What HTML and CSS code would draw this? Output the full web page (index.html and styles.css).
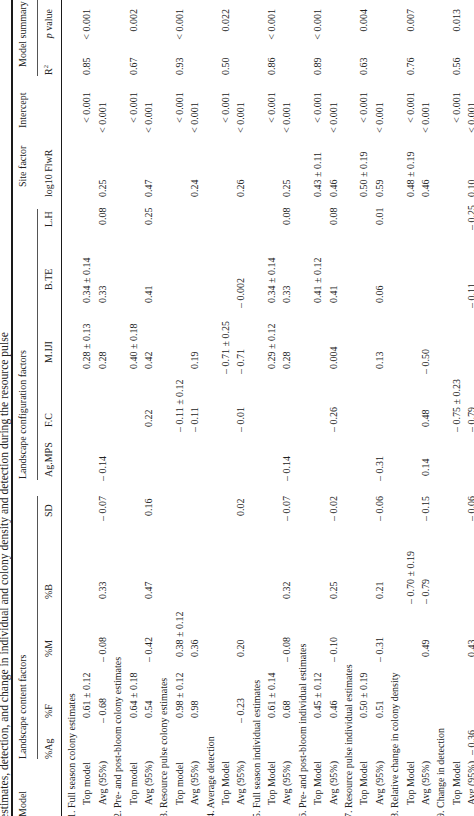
FILE: index.html
```html
<!DOCTYPE html>
<html>
<head>
<meta charset="utf-8">
<link rel="stylesheet" href="styles.css">
</head>
<body>
<div class="page">
 <div class="rot">
  <div class="sheet">
   <div class="caption">estimates, detection, and change in individual and colony density and detection during the resource pulse</div>
   <div class="rule-thick"></div>
   <div class="grid groups">
    <div class="c1 flush">Model</div>
    <div class="g-content">Landscape content factors</div>
    <div class="g-config">Landscape configuration factors</div>
    <div class="g-site">Site factor</div>
    <div class="g-int">Intercept</div>
    <div class="g-sum">Model summary</div>
   </div>
   <div class="grid cols">
    <div class="c2 h-ag">%Ag</div>
    <div class="c3">%F</div>
    <div class="c4">%M</div>
    <div class="c5">%B</div>
    <div class="c6 h-sd">SD</div>
    <div class="c7 h-mps">Ag.MPS</div>
    <div class="c8">F.C</div>
    <div class="c9 h-iji">M.IJI</div>
    <div class="c10 h-te">B.TE</div>
    <div class="c11 h-lh">L.H</div>
    <div class="c12">log10 FlwR</div>
    <div class="c14">R<sup>2</sup></div>
    <div class="c15 h-p"><i>p</i> value</div>
   </div>
   <div class="rule-thick rule-low"></div>

   <div class="grid row"><div class="sec">1. Full season colony estimates</div></div>
   <div class="grid row">
    <div class="c1 lbl">Top model</div><div class="c3">0.61 ± 0.12</div><div class="c9">0.28 ± 0.13</div><div class="c10">0.34 ± 0.14</div><div class="c13">&lt; 0.001</div><div class="c14">0.85</div><div class="c15">&lt; 0.001</div>
   </div>
   <div class="grid row">
    <div class="c1 lbl">Avg (95%)</div><div class="c3 neg">– 0.68</div><div class="c4 neg">– 0.08</div><div class="c5">0.33</div><div class="c6 neg">– 0.07</div><div class="c7 neg">– 0.14</div><div class="c9">0.28</div><div class="c10">0.33</div><div class="c11">0.08</div><div class="c12">0.25</div><div class="c13 int-avg">&lt; 0.001</div>
   </div>

   <div class="grid row"><div class="sec">2. Pre- and post-bloom colony estimates</div></div>
   <div class="grid row">
    <div class="c1 lbl">Top model</div><div class="c3">0.64 ± 0.18</div><div class="c9">0.40 ± 0.18</div><div class="c13">&lt; 0.001</div><div class="c14">0.67</div><div class="c15">0.002</div>
   </div>
   <div class="grid row">
    <div class="c1 lbl">Avg (95%)</div><div class="c3">0.54</div><div class="c4 neg">– 0.42</div><div class="c5">0.47</div><div class="c6">0.16</div><div class="c8">0.22</div><div class="c9">0.42</div><div class="c10">0.41</div><div class="c11">0.25</div><div class="c12">0.47</div><div class="c13 int-avg">&lt; 0.001</div>
   </div>

   <div class="grid row"><div class="sec">3. Resource pulse colony estimates</div></div>
   <div class="grid row">
    <div class="c1 lbl">Top model</div><div class="c3">0.98 ± 0.12</div><div class="c4">0.38 ± 0.12</div><div class="c8 neg">– 0.11 ± 0.12</div><div class="c13">&lt; 0.001</div><div class="c14">0.93</div><div class="c15">&lt; 0.001</div>
   </div>
   <div class="grid row">
    <div class="c1 lbl">Avg (95%)</div><div class="c3">0.98</div><div class="c4">0.36</div><div class="c8 neg">– 0.11</div><div class="c9">0.19</div><div class="c12">0.24</div><div class="c13 int-avg">&lt; 0.001</div>
   </div>

   <div class="grid row"><div class="sec">4. Average detection</div></div>
   <div class="grid row">
    <div class="c1 lbl">Top Model</div><div class="c9 neg">– 0.71 ± 0.25</div><div class="c13">&lt; 0.001</div><div class="c14">0.50</div><div class="c15">0.022</div>
   </div>
   <div class="grid row">
    <div class="c1 lbl">Avg (95%)</div><div class="c3 neg">– 0.23</div><div class="c4">0.20</div><div class="c6">0.02</div><div class="c8 neg">– 0.01</div><div class="c9 neg">– 0.71</div><div class="c10 neg">– 0.002</div><div class="c12">0.26</div><div class="c13 int-avg">&lt; 0.001</div>
   </div>

   <div class="grid row"><div class="sec">5. Full season individual estimates</div></div>
   <div class="grid row">
    <div class="c1 lbl">Top Model</div><div class="c3">0.61 ± 0.14</div><div class="c9">0.29 ± 0.12</div><div class="c10">0.34 ± 0.14</div><div class="c13">&lt; 0.001</div><div class="c14">0.86</div><div class="c15">&lt; 0.001</div>
   </div>
   <div class="grid row">
    <div class="c1 lbl">Avg (95%)</div><div class="c3">0.68</div><div class="c4 neg">– 0.08</div><div class="c5">0.32</div><div class="c6 neg">– 0.07</div><div class="c7 neg">– 0.14</div><div class="c9">0.28</div><div class="c10">0.33</div><div class="c11">0.08</div><div class="c12">0.25</div><div class="c13 int-avg">&lt; 0.001</div>
   </div>

   <div class="grid row"><div class="sec">6. Pre- and post-bloom individual estimates</div></div>
   <div class="grid row">
    <div class="c1 lbl">Top Model</div><div class="c3">0.45 ± 0.12</div><div class="c10">0.41 ± 0.12</div><div class="c12">0.43 ± 0.11</div><div class="c13">&lt; 0.001</div><div class="c14">0.89</div><div class="c15">&lt; 0.001</div>
   </div>
   <div class="grid row">
    <div class="c1 lbl">Avg (95%)</div><div class="c3">0.46</div><div class="c4 neg">– 0.10</div><div class="c5">0.25</div><div class="c6 neg">– 0.02</div><div class="c8 neg">– 0.26</div><div class="c9">0.004</div><div class="c10">0.41</div><div class="c11">0.08</div><div class="c12">0.46</div><div class="c13 int-avg">&lt; 0.001</div>
   </div>

   <div class="grid row"><div class="sec">7. Resource pulse individual estimates</div></div>
   <div class="grid row">
    <div class="c1 lbl">Top Model</div><div class="c3">0.50 ± 0.19</div><div class="c12">0.50 ± 0.19</div><div class="c13">&lt; 0.001</div><div class="c14">0.63</div><div class="c15">0.004</div>
   </div>
   <div class="grid row">
    <div class="c1 lbl">Avg (95%)</div><div class="c3">0.51</div><div class="c4 neg">– 0.31</div><div class="c5">0.21</div><div class="c6 neg">– 0.06</div><div class="c7 neg">– 0.31</div><div class="c9">0.13</div><div class="c10">0.06</div><div class="c11">0.01</div><div class="c12">0.59</div><div class="c13 int-avg">&lt; 0.001</div>
   </div>

   <div class="grid row"><div class="sec">8. Relative change in colony density</div></div>
   <div class="grid row">
    <div class="c1 lbl">Top Model</div><div class="c5 neg">– 0.70 ± 0.19</div><div class="c12">0.48 ± 0.19</div><div class="c13">&lt; 0.001</div><div class="c14">0.76</div><div class="c15">0.007</div>
   </div>
   <div class="grid row">
    <div class="c1 lbl">Avg (95%)</div><div class="c4">0.49</div><div class="c5 neg">– 0.79</div><div class="c6 neg">– 0.15</div><div class="c7">0.14</div><div class="c8">0.48</div><div class="c9 neg">– 0.50</div><div class="c12">0.46</div><div class="c13 int-avg">&lt; 0.001</div>
   </div>

   <div class="grid row"><div class="sec">9. Change in detection</div></div>
   <div class="grid row">
    <div class="c1 lbl">Top Model</div><div class="c8 neg">– 0.75 ± 0.23</div><div class="c13">&lt; 0.001</div><div class="c14">0.56</div><div class="c15">0.013</div>
   </div>
   <div class="grid row">
    <div class="c1 lbl">Avg (95%)</div><div class="c2">– 0.36</div><div class="c4">0.43</div><div class="c6 neg">– 0.06</div><div class="c8 neg">– 0.79</div><div class="c10 neg">– 0.11</div><div class="c11 neg">– 0.25</div><div class="c12">0.10</div><div class="c13 int-avg">&lt; 0.001</div>
   </div>
  </div>
 </div>
</div>
</body>
</html>
```
FILE: styles.css
```css
* { box-sizing: border-box; }
html, body { margin: 0; padding: 0; background: #fff; }

.page {
  width: 474px;
  height: 816px;
  overflow: hidden;
  background: #fff;
}

.rot {
  width: 816px;
  height: 474px;
  transform-origin: 0 0;
  transform: translateY(816px) rotate(-90deg);
}

.sheet {
  font-family: "Liberation Serif", "Times New Roman", serif;
  font-size: 10px;
  color: #222;
}

.caption {
  height: 11px;
  line-height: 9px;
  font-size: 11.6px;
  white-space: nowrap;
  margin-left: -3px;
}

.rule-thick {
  height: 1.5px;
  background: #1a1a1a;
}

.rule-low { margin-bottom: 2px; }

.grid {
  display: grid;
  grid-template-columns: 61px 37px 61px 58px 83px 40px 49px 58px 66px 78px 28px 74px 48px 21px 54px;
  white-space: nowrap;
}

.grid > div { grid-row: 1; }

.groups {
  height: 25px;
}
.groups > div {
  padding-top: 4px;
  line-height: 12px;
}

.flush { margin-left: -1px; }

.g-content {
  grid-column: 2 / 7;
  border-bottom: 1px solid #555;
  margin-left: -4px;
  margin-right: 20px;
}
.g-config {
  grid-column: 7 / 12;
  border-bottom: 1px solid #555;
  padding-left: 1px;
  margin-left: -4px;
  margin-right: 12px;
}
.g-site {
  grid-column: 12 / 13;
  padding-left: 10px;
}
.g-int {
  grid-column: 13 / 14;
  margin-left: -5px;
}
.g-sum {
  grid-column: 14 / 16;
  border-bottom: 1px solid #555;
  padding-left: 9px;
  margin-left: -1px;
}

.cols {
  height: 23px;
  align-items: center;
  line-height: 12px;
}

.cols sup {
  font-size: 6.5px;
  line-height: 0;
  vertical-align: 4px;
}

.h-ag { margin-left: -4px; }
.h-sd { margin-left: -1px; }
.h-mps { margin-left: -1px; }
.h-iji { padding-left: 6px; }
.h-te { padding-left: 13px; }
.h-lh { margin-left: -2px; }
.h-p { padding-right: 5px; }

.row {
  height: 15.4px;
  line-height: 15.4px;
}

.sec {
  grid-column: 1 / -1;
  margin-left: -2px;
}
.lbl { padding-left: 11px; }

.c1 { grid-column: 1; }
.c2 { grid-column: 2; }
.c3 { grid-column: 3; }
.c4 { grid-column: 4; }
.c5 { grid-column: 5; }
.c6 { grid-column: 6; }
.c7 { grid-column: 7; }
.c8 { grid-column: 8; }
.c9 { grid-column: 9; }
.c10 { grid-column: 10; }
.c11 { grid-column: 11; }
.c12 { grid-column: 12; }
.c13 { grid-column: 13; }
.c14 { grid-column: 14; }
.c15 {
  grid-column: 15;
  text-align: right;
  padding-right: 9px;
}

.neg { margin-left: -5px; }
.int-avg { margin-left: -10px; }
```
